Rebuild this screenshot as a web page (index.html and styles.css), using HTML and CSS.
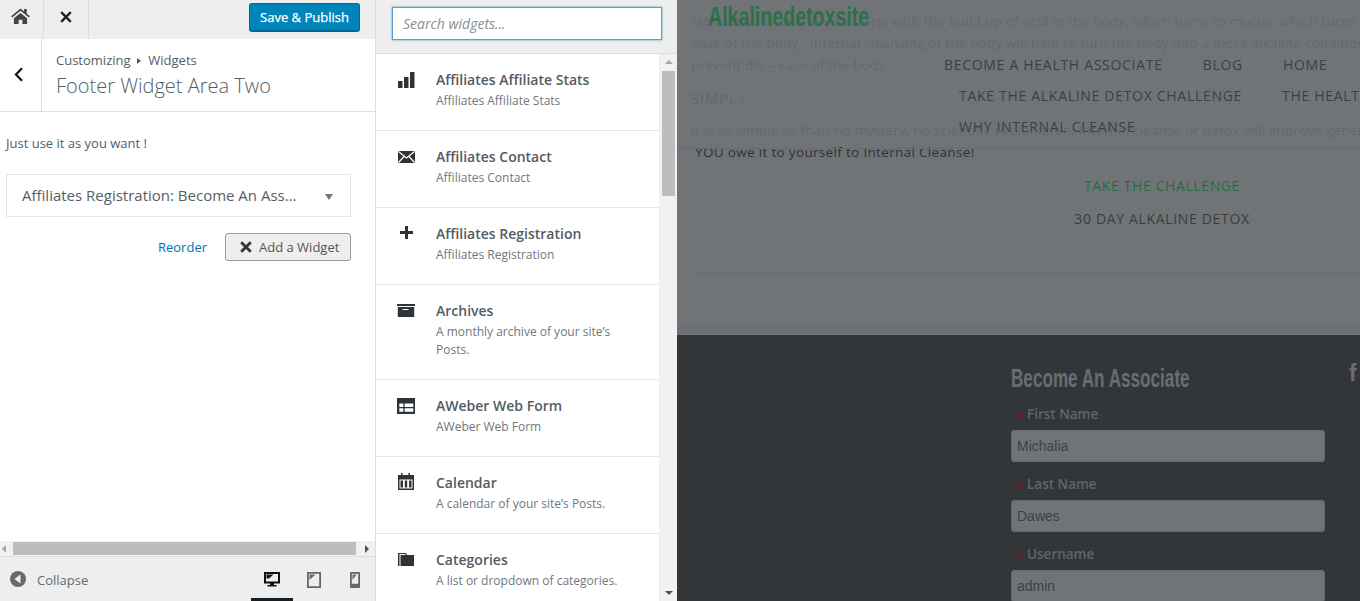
FILE: index.html
```html
<!DOCTYPE html>
<html lang="en">
<head>
<meta charset="utf-8">
<title>Customize: Widgets</title>
<link rel="stylesheet" href="styles.css">
</head>
<body>
<div class="app">
  <aside class="controls">
    <div class="topbar">
      <a class="top-btn home-btn"><svg width="19" height="16" viewBox="0 0 20 17"><path fill="#444" d="M10 .6 0 8.800l1.100 1.300L10 2.900l8.900 7.200L20 8.800l-3.400-2.700V1h-2.800v2.800zM3 10.800v6.200h5v-4.600h4V17h5v-6.200L10 5.200z"/></svg></a>
      <a class="top-btn close-btn"><svg width="12" height="12" viewBox="0 0 12 12"><path stroke="#222" stroke-width="2.400" d="M1.200 1.200l9.600 9.600M10.800 1.200l-9.600 9.600"/></svg></a>
      <button class="publish">Save &amp; Publish</button>
    </div>
    <div class="section-head">
      <a class="back"><svg width="10" height="15" viewBox="0 0 10 15"><path fill="none" stroke="#111" stroke-width="2.200" d="M8 1.200 2 7.500l6 6.300"/></svg></a>
      <div class="crumbs">
        <div class="crumb-line">Customizing <span class="crumb-sep"></span> Widgets</div>
        <div class="section-title">Footer Widget Area Two</div>
      </div>
    </div>
    <div class="panel">
      <p class="desc">Just use it as you want !</p>
      <div class="widget-row"><span class="widget-name">Affiliates Registration: Become An Ass...</span><i class="caret"></i></div>
      <div class="actions">
        <a class="reorder">Reorder</a>
        <button class="add-widget"><svg width="12" height="12" viewBox="0 0 12 12"><path stroke="#333" stroke-width="2.800" d="M1.200 1.200l9.600 9.600M10.800 1.200l-9.600 9.600"/></svg>Add a Widget</button>
      </div>
    </div>
    <div class="hscroll">
      <i class="arrow-left"></i>
      <div class="hthumb"></div>
      <i class="arrow-right"></i>
    </div>
    <div class="footbar">
      <svg class="collapse-ico" width="16" height="16" viewBox="0 0 16 16"><circle cx="8" cy="8" r="8" fill="#656a6f"/><path fill="#eee" d="M10.500 3.600v8.800L4.400 8z"/></svg>
      <span class="collapse-text">Collapse</span>
      <div class="devices">
        <a class="device active"><svg width="16" height="16" viewBox="0 0 16 16"><path fill="#111" fill-rule="evenodd" d="M0 0h16v11.500H10v1.500h2.500v1.500H3.500V13H6v-1.500H0zM2 2v7.500h12V2z"/><path fill="#111" d="M2.500 2.500h7L5 6.500H2.500z"/></svg></a>
        <a class="device"><svg width="14" height="16" viewBox="0 0 14 16"><path fill="#666" fill-rule="evenodd" d="M0 0h14v16H0zM1.800 1.800v12.400h10.400V1.800z"/><path fill="#666" d="M2.500 2.500h6L2.500 8z"/></svg></a>
        <a class="device"><svg width="10" height="16" viewBox="0 0 10 16"><path fill="#666" fill-rule="evenodd" d="M1 0h8a1 1 0 0 1 1 1v14a1 1 0 0 1-1 1H1a1 1 0 0 1-1-1V1a1 1 0 0 1 1-1zM1.800 1.800v10h6.400v-10z"/><path fill="#666" d="M2.500 2.500h4L2.500 8z"/></svg></a>
      </div>
    </div>
  </aside>

  <section class="available">
    <div class="search-bar"><input class="search" type="text" placeholder="Search widgets..."></div>
    <div class="list-wrap">
      <ul class="widget-list">
        <li class="tile"><svg class="tile-ico" viewBox="0 0 20 24"><path fill="#2e3338" d="M1 12h4.500v7H1zM7 8h4.500v11H7zM13 3h4.500v16H13z"/></svg><div class="tile-body"><h3>Affiliates Affiliate Stats</h3><p>Affiliates Affiliate Stats</p></div></li>
        <li class="tile"><svg class="tile-ico" viewBox="0 0 20 24"><path fill="#2e3338" d="M1 5h17v12H1z"/><path fill="none" stroke="#fff" stroke-width="1.200" d="M1.500 5.500 9.500 12 17.500 5.500M1.500 16.500l6-6.500M17.500 16.500l-6-6.500"/></svg><div class="tile-body"><h3>Affiliates Contact</h3><p>Affiliates Contact</p></div></li>
        <li class="tile"><svg class="tile-ico" viewBox="0 0 20 24"><path fill="#2e3338" d="M8 3h3v5h5v3h-5v5H8v-5H3V8h5z"/></svg><div class="tile-body"><h3>Affiliates Registration</h3><p>Affiliates Registration</p></div></li>
        <li class="tile"><svg class="tile-ico" viewBox="0 0 20 24"><path fill="#2e3338" fill-rule="evenodd" d="M0 4h18v2H0zM.8 7h16.400v10H.8zM5.500 9v1h6V9z"/></svg><div class="tile-body"><h3>Archives</h3><p>A monthly archive of your site’s Posts.</p></div></li>
        <li class="tile"><svg class="tile-ico" viewBox="0 0 20 24"><path fill="#2e3338" d="M0 3h18v16H0z"/><path fill="#fff" d="M2.300 8.600h4v3.400h-4zM7.600 8.600h8.700v3.400H7.600zM2.300 13.300h4v3.400h-4zM7.600 13.300h8.700v3.400H7.600z"/></svg><div class="tile-body"><h3>AWeber Web Form</h3><p>AWeber Web Form</p></div></li>
        <li class="tile"><svg class="tile-ico" viewBox="0 0 20 24"><path fill="#2e3338" fill-rule="evenodd" d="M1 3h3V1h1.500v2h6V1H13v2h4v15H1zM2.500 7.500v9h13v-9z"/><path fill="#2e3338" d="M3.500 8.500h2.500v7H3.500zM7.800 8.500h2.400v7H7.800zM12 8.500h2.500v7H12z"/></svg><div class="tile-body"><h3>Calendar</h3><p>A calendar of your site’s Posts.</p></div></li>
        <li class="tile"><svg class="tile-ico" viewBox="0 0 20 24"><path fill="#2e3338" d="M1 4h8l1 2h7v11H1z"/><path fill="#fff" d="M2.500 5h6v1h-5v11h-1z"/></svg><div class="tile-body"><h3>Categories</h3><p>A list or dropdown of categories.</p></div></li>
      </ul>
      <div class="vscroll">
        <i class="arrow-up"></i>
        <div class="vthumb"></div>
        <i class="arrow-down"></i>
      </div>
    </div>
  </section>

  <main class="preview">
    <div class="article">
      <p>Most disease and illness starts with the build up of acid in the body, which turns to mucus, which turns into dis –</p>
      <p>ease of the body.&nbsp; Internal cleansing of the body will help to turn the body into a more alkaline condition and</p>
      <p>prevent dis – ease of the body.</p>
      <h4>SIMPLY</h4>
      <p>It is as simple as that! no mystery, no scientific explanation, Internal cleanse or detox will improve general health.</p>
      <p class="owe">YOU owe it to yourself to Internal Cleanse!</p>
      <div class="cta">
        <div class="cta-green">TAKE THE CHALLENGE</div>
        <div class="cta-dark">30 DAY ALKALINE DETOX</div>
      </div>
      <hr class="rule">
    </div>
    <div class="site-footer">
      <div class="form-col">
        <h2>Become An Associate</h2>
        <label><i></i>First Name</label>
        <div class="field">Michalia</div>
        <label><i></i>Last Name</label>
        <div class="field">Dawes</div>
        <label><i></i>Username</label>
        <div class="field">admin</div>
      </div>
      <span class="fb">f</span>
    </div>
    <header class="site-head">
      <div class="site-name">Alkalinedetoxsite</div>
      <nav class="site-nav">
        <div class="nav-row nav-one"><a>BECOME A HEALTH ASSOCIATE</a><a>BLOG</a><a>HOME</a></div>
        <div class="nav-row nav-two"><a>TAKE THE ALKALINE DETOX CHALLENGE</a><a>THE HEALTH</a></div>
        <div class="nav-row nav-three"><a>WHY INTERNAL CLEANSE</a></div>
      </nav>
    </header>
  </main>
</div>
</body>
</html>
```

FILE: styles.css
```css
* { box-sizing: border-box; }
html, body { margin: 0; padding: 0; height: 100%; overflow: hidden; }
body { font-family: "Open Sans", sans-serif; color: #555d66; background: #fff; }
.app { display: flex; width: 1360px; height: 601px; overflow: hidden; }
a { display: block; }
ul { list-style: none; margin: 0; padding: 0; }

/* left */
.controls { width: 376px; flex: none; display: flex; flex-direction: column; border-right: 1px solid #ddd; background: #fff; }
.topbar { height: 39px; flex: none; display: flex; align-items: flex-start; background: #eee; }
.top-btn { height: 39px; display: flex; align-items: center; justify-content: center; border-right: 1px solid #ddd; padding-bottom: 7px; }
.home-btn { width: 44px; padding-right: 3px; }
.close-btn { width: 45px; padding-bottom: 6px; }
.publish { margin: 3px 15px 0 auto; width: 111px; height: 29px; border: 1px solid #006799; border-bottom-width: 2px; border-radius: 3px; background: #0085ba; color: #fff; font: 400 13px/1 "Open Sans", sans-serif; -webkit-text-stroke: .25px #fff; padding: 0; }
.section-head { height: 73px; flex: none; display: flex; border-bottom: 1px solid #ddd; }
.back { width: 42px; border-right: 1px solid #ddd; display: flex; align-items: center; justify-content: center; padding-right: 3px; padding-bottom: 1px; }
.crumbs { padding-left: 14px; }
.crumb-line { font-size: 13px; line-height: 18px; margin-top: 12px; color: #555d66; }
.crumb-sep { display: inline-block; width: 0; height: 0; border-left: 4px solid #555; border-top: 3px solid transparent; border-bottom: 3px solid transparent; margin: 0 4px 2px 3px; vertical-align: middle; }
.section-title { font-size: 20px; line-height: 28px; margin-top: 3px; font-weight: 300; color: #555d66; }
.panel { flex: 1; min-height: 0; padding: 0 24px 0 0; }
.desc { margin: 21px 0 0 6px; font-size: 13px; line-height: 20px; color: #555d66; }
.widget-row { margin: 21px 0 0 6px; height: 43px; border: 1px solid #e5e5e5; display: flex; align-items: center; justify-content: space-between; padding: 0 17px 0 15px; font-size: 15px; color: #555d66; white-space: nowrap; }
.widget-name { margin-bottom: 2px; }
.caret { width: 0; height: 0; border-left: 4px solid transparent; border-right: 4px solid transparent; border-top: 6px solid #72777c; margin-top: 2px; }
.actions { margin-top: 16px; display: flex; justify-content: flex-end; align-items: center; }
.reorder { font-size: 13px; color: #0073aa; margin-right: 18px; }
.add-widget { width: 126px; height: 28px; border: 1px solid #999; border-radius: 3px; background: #eee; color: #555; font: 13px "Open Sans", sans-serif; display: flex; align-items: center; padding: 0 0 0 14px; gap: 7px; }
.hscroll { height: 15px; flex: none; display: flex; align-items: center; background: #f1f1f1; }
.hthumb { width: 343px; height: 13px; background: #bdbdbd; margin-left: 7px; }
.arrow-left { margin-left: 2px; width: 0; height: 0; border-right: 4px solid #a3a3a3; border-top: 4px solid transparent; border-bottom: 4px solid transparent; }
.arrow-right { margin-left: 9px; width: 0; height: 0; border-left: 4px solid #505050; border-top: 4px solid transparent; border-bottom: 4px solid transparent; }
.footbar { height: 45px; flex: none; display: flex; align-items: center; background: #eee; border-top: 1px solid #ddd; padding-left: 10px; }
.collapse-text { margin-left: 11px; margin-top: 1px; font-size: 13px; color: #656a6f; }
.devices { margin-left: auto; display: flex; height: 100%; }
.device { width: 42px; display: flex; justify-content: center; padding-top: 15px; height: 44px; }
.device:last-child { width: 40px; }
.device.active { border-bottom: 3px solid #191e23; }

/* middle */
.available { width: 301px; flex: none; display: flex; flex-direction: column; background: #eee; }
.search-bar { height: 54px; flex: none; padding: 7px 15px 0 16px; border-bottom: 1px solid #ddd; }
.search { width: 100%; height: 33px; display: block; border: 1px solid #5b9dd9; box-shadow: 0 0 2px rgba(30,140,190,.8); padding: 0 10px; font: italic 14px "Open Sans", sans-serif; color: #777; outline: 0; background: #fff; }
.search::placeholder { color: #8a8f94; opacity: 1; }
.list-wrap { flex: 1; min-height: 0; display: flex; }
.widget-list { width: 283px; flex: none; background: #fff; overflow: hidden; }
.tile { display: flex; padding: 15px 20px 0 21px; border-bottom: 1px solid #e5e5e5; }
.tile-ico { width: 20px; height: 24px; flex: none; display: block; margin-right: 19px; }
.tile h3 { margin: 0; font-size: 14px; font-weight: 600; line-height: 21px; color: #555b61; }
.tile p { margin: 2px 0 20px; font-size: 12px; line-height: 18px; color: #72777c; }
.vscroll { width: 18px; flex: none; background: #f1f1f1; display: flex; flex-direction: column; align-items: center; border-left: 1px solid #eee; }
.vthumb { width: 13px; height: 125px; margin-top: 7px; background: #bdbdbd; }
.arrow-up { margin-top: 6px; width: 0; height: 0; border-bottom: 4px solid #a3a3a3; border-left: 4px solid transparent; border-right: 4px solid transparent; }
.arrow-down { margin-top: auto; margin-bottom: 6px; width: 0; height: 0; border-top: 4px solid #505050; border-left: 4px solid transparent; border-right: 4px solid transparent; }

/* preview */
.preview { position: relative; flex: 1; min-width: 0; background: #707477; overflow: hidden; display: flex; flex-direction: column; }
.article { height: 335px; flex: none; padding: 12px 0 0 14px; white-space: nowrap; color: #65696d; font-size: 13.500px; letter-spacing: .2px; box-shadow: inset 0 -10px 0 #6d7074; }
.article p { margin: 0 0 3px; line-height: 19px; }
.article h4 { margin: 14px 0 14px; font-size: 15px; letter-spacing: .8px; font-weight: 400; line-height: 18px; }
.article .owe { color: #2f3235; padding-left: 4px; letter-spacing: .33px; }
.cta { text-align: center; width: 942px; padding-top: 11px; letter-spacing: .62px; }
.cta-green { color: #256e45; font-size: 14px; line-height: 20px; }
.cta-dark { color: #3a3d40; font-size: 14px; line-height: 20px; margin-top: 13px; letter-spacing: .66px; }
.rule { margin: 44px 0 0 5px; border: 0; border-top: 1px solid #686c70; }
.site-footer { flex: 1; background: #333639; position: relative; display: flex; }
.form-col { margin-left: 334px; width: 314px; flex: none; }
.form-col h2 { margin: 29px 0 0; height: 28px; font: 700 25px/28px "Liberation Sans", sans-serif; color: #696d71; white-space: nowrap; transform: scaleX(.685); transform-origin: left; }
.form-col label { display: flex; align-items: center; margin-top: 12px; padding-left: 6px; height: 21px; font-size: 13.500px; line-height: 21px; font-weight: 600; color: #61656a; }
.form-col label i { width: 4px; height: 4px; background: #7a1414; margin-right: 6px; }
.field { height: 32px; background: #707477; border: 1px solid #666a6e; border-radius: 3px; padding: 0 5px; font: 14px/30px "Liberation Sans", sans-serif; color: #3d4044; margin-top: 5px; }
.fb { position: absolute; left: 672px; top: 25px; font: 700 23px/26px "Liberation Sans", sans-serif; color: #696d71; }
.site-head { position: absolute; left: 0; top: 0; width: 683px; height: 149px; border-bottom: 1px solid #686c70; }
.site-name { position: absolute; left: 31px; top: 1px; font: 700 28px/32px "Liberation Sans", sans-serif; color: #2b7048; white-space: nowrap; transform: scaleX(.7); transform-origin: left; }
.site-nav { position: absolute; left: 0; top: 0; width: 100%; white-space: nowrap; font-size: 14px; letter-spacing: .7px; color: #3d4044; }
.nav-row { position: absolute; display: flex; gap: 40px; line-height: 20px; }
.nav-one { left: 267px; top: 55px; }
.nav-two { left: 282px; top: 86px; }
.nav-three { left: 282px; top: 117px; }
```
